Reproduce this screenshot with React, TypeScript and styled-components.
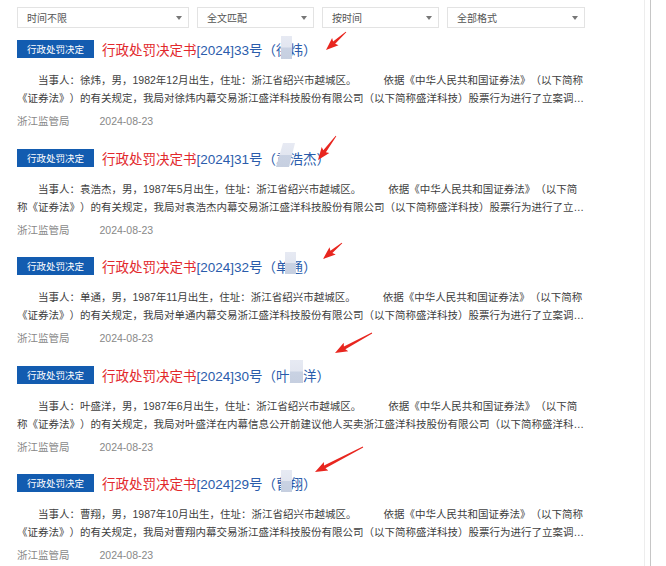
import React from "react";
import styled, { createGlobalStyle } from "styled-components";

const GlobalStyle = createGlobalStyle`
  body {
    margin: 0;
    background: #fff;
    font-family: "Liberation Sans", "Noto Sans CJK SC", sans-serif;
  }
`;

const Page = styled.div`
  position: relative;
  display: flex;
  min-height: 566px;
`;

const Main = styled.div`
  box-sizing: border-box;
  width: 645px;
  border-right: 1px solid #ededed;
  padding: 7px 0 0 17px;
`;

const Rail = styled.div`
  width: 1px;
  margin-left: 5px;
  background: #c6c6c6;
`;

const Toolbar = styled.div`
  display: flex;
  gap: 8px;
`;

const Select = styled.div<{ w: number }>`
  box-sizing: border-box;
  width: ${(p) => p.w}px;
  height: 21px;
  border: 1px solid #e3e3e3;
  padding: 0 6px 0 9px;
  display: flex;
  align-items: center;
  justify-content: space-between;
  font-size: 10px;
  color: #555;
`;

const Caret = styled.span`
  width: 0;
  height: 0;
  border-left: 3px solid transparent;
  border-right: 3px solid transparent;
  border-top: 4px solid #777;
`;

const List = styled.div`
  margin-top: 12px;
`;

const Item = styled.div`
  margin-bottom: 19.5px;
`;

const Head = styled.div`
  display: flex;
  align-items: center;
  height: 18px;
`;

const Badge = styled.span`
  width: 77px;
  height: 18px;
  display: flex;
  align-items: center;
  justify-content: center;
  background: #135cb0;
  color: #fff;
  font-size: 9.5px;
`;

const Title = styled.span`
  margin-left: 8px;
  font-size: 13.5px;
  color: #2a5cab;
  white-space: nowrap;
  text-spacing-trim: space-all;
`;

const Red = styled.span`
  color: #e2282c;
`;

const Body = styled.div`
  width: 568px;
  margin-top: 13px;
  font-size: 10.5px;
  line-height: 18px;
  color: #404040;
  text-indent: 2em;
  text-spacing-trim: space-all;
  display: -webkit-box;
  -webkit-line-clamp: 2;
  -webkit-box-orient: vertical;
  overflow: hidden;
`;

const Gap = styled.span`
  display: inline-block;
  width: 27px;
`;

const Foot = styled.div`
  margin-top: 6px;
  display: flex;
  gap: 30px;
  font-size: 10.5px;
  line-height: 16px;
  color: #888;
`;

const Layer = styled.svg`
  position: absolute;
  left: 0;
  top: 0;
  pointer-events: none;
`;

const filters = [
  { label: "时间不限", w: 172 },
  { label: "全文匹配", w: 117 },
  { label: "按时间", w: 117 },
  { label: "全部格式", w: 138 },
];

const cases = [
  { no: "33", name: "徐炜", birth: "1982年12月", act: "内幕交易浙江盛洋科技股份有限公司（以下简称盛洋科技）股票行为" },
  { no: "31", name: "袁浩杰", birth: "1987年5月", act: "内幕交易浙江盛洋科技股份有限公司（以下简称盛洋科技）股票行为" },
  { no: "32", name: "单通", birth: "1987年11月", act: "内幕交易浙江盛洋科技股份有限公司（以下简称盛洋科技）股票行为" },
  { no: "30", name: "叶盛洋", birth: "1987年6月", act: "在内幕信息公开前建议他人买卖浙江盛洋科技股份有限公司（以下简称盛洋科技）股票的行为" },
  { no: "29", name: "曹翔", birth: "1987年10月", act: "内幕交易浙江盛洋科技股份有限公司（以下简称盛洋科技）股票行为" },
];

// red hand drawn arrows, tail -> tip
const arrows = [
  [346, 32, 326, 50],
  [336, 136, 318, 160],
  [342, 243, 323, 259],
  [372, 333, 335, 353],
  [363, 447, 315, 472],
];

// privacy patches over the names
const patches = [
  "281,36 292,36 292,59 281,59",
  "283,143 295,143 289,167 276,167",
  "285,252 296,252 296,274 285,274",
  "290,360 303,360 303,383 290,383",
  "281,470 292,470 292,492 281,492",
];

function arrowPoints(x1: number, y1: number, x2: number, y2: number) {
  const len = Math.hypot(x2 - x1, y2 - y1);
  const ux = (x2 - x1) / len;
  const uy = (y2 - y1) / len;
  const nx = -uy;
  const ny = ux;
  const hl = Math.min(11, len * 0.45);
  const bx = x2 - ux * hl;
  const by = y2 - uy * hl;
  const pts = [
    [x1 + nx * 0.4, y1 + ny * 0.4],
    [bx + nx * 1.6, by + ny * 1.6],
    [bx + nx * 4.8 - ux * 1.5, by + ny * 4.8 - uy * 1.5],
    [x2, y2],
    [bx - nx * 4.8 - ux * 1.5, by - ny * 4.8 - uy * 1.5],
    [bx - nx * 1.6, by - ny * 1.6],
    [x1 - nx * 0.4, y1 - ny * 0.4],
  ];
  return pts.map((p) => p.map((v) => v.toFixed(1)).join(",")).join(" ");
}

export default function App() {
  return (
    <Page>
      <GlobalStyle />
      <Main>
        <Toolbar>
          {filters.map((f) => (
            <Select key={f.label} w={f.w}>
              {f.label}
              <Caret />
            </Select>
          ))}
        </Toolbar>
        <List>
          {cases.map((c) => (
            <Item key={c.no}>
              <Head>
                <Badge>行政处罚决定</Badge>
                <Title>
                  <Red>行政处罚决定书</Red>[2024]{c.no}号（{c.name}）
                </Title>
              </Head>
              <Body>
                当事人：{c.name}，男，{c.birth}出生，住址：浙江省绍兴市越城区。
                <Gap />
                依据《中华人民共和国证券法》（以下简称《证券法》）的有关规定，我局对{c.name}
                {c.act}进行了立案调查、审理，并依法向当事人告知了作出行政处罚的事实、理由、依据及当事人依法享有的权利。
              </Body>
              <Foot>
                <span>浙江监管局</span>
                <span>2024-08-23</span>
              </Foot>
            </Item>
          ))}
        </List>
      </Main>
      <Rail />
      <Layer width="666" height="566">
        <defs>
          <linearGradient id="patch" x1="0" y1="0" x2="0" y2="1">
            <stop offset="0" stopColor="#e7eaf3" />
            <stop offset="0.48" stopColor="#e2e6f0" />
            <stop offset="0.52" stopColor="#c9d2e3" />
            <stop offset="1" stopColor="#c6cfe0" />
          </linearGradient>
        </defs>
        {patches.map((p) => (
          <polygon key={p} points={p} fill="url(#patch)" />
        ))}
        {arrows.map(([a, b, c, d]) => (
          <polygon key={`${a}-${b}`} points={arrowPoints(a, b, c, d)} fill="#e8261f" />
        ))}
      </Layer>
    </Page>
  );
}
